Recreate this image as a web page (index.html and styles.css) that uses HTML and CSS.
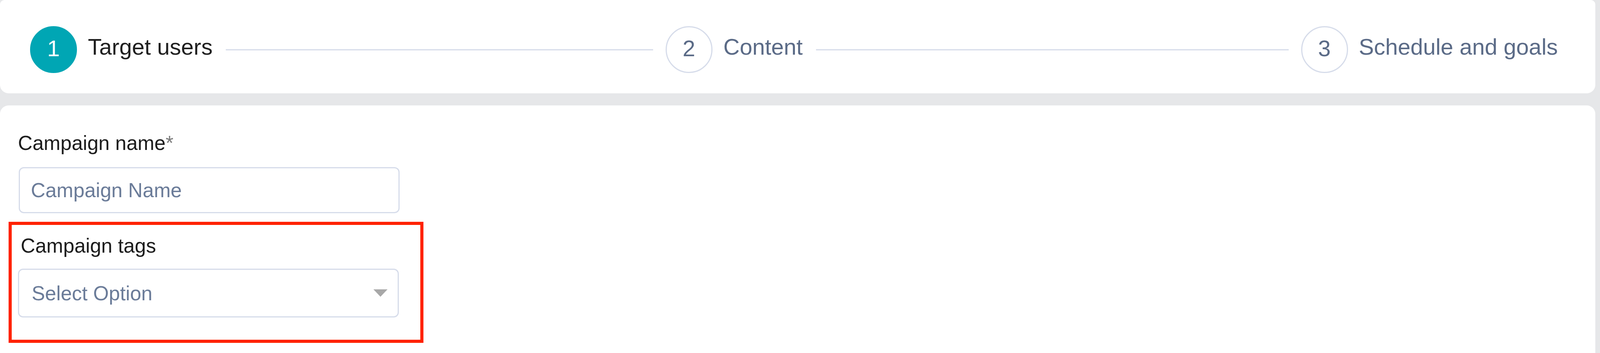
FILE: index.html
```html
<!DOCTYPE html>
<html lang="en">
<head>
<meta charset="utf-8">
<title>Create campaign</title>
<link rel="stylesheet" href="styles.css">
</head>
<body>
<div class="page">
  <section class="card stepper">
    <div class="step active">
      <span class="step-num">1</span>
      <span class="step-label">Target users</span>
      <span class="step-line"></span>
    </div>
    <div class="step">
      <span class="step-num">2</span>
      <span class="step-label">Content</span>
      <span class="step-line"></span>
    </div>
    <div class="step last">
      <span class="step-num">3</span>
      <span class="step-label">Schedule and goals</span>
    </div>
  </section>
  <section class="card form">
    <div class="field">
      <label class="field-label" for="cname">Campaign name<span class="req">*</span></label>
      <input class="text-input" id="cname" type="text" placeholder="Campaign Name">
    </div>
    <div class="field field-highlight">
      <label class="field-label tags-label">Campaign tags</label>
      <div class="select" role="combobox" aria-expanded="false">
        <span class="select-placeholder">Select Option</span>
        <svg class="select-arrow" width="36" height="19" viewBox="0 0 36 19" aria-hidden="true"><polygon points="0,0 36,0 18,19" fill="#a8a8a8"/></svg>
      </div>
    </div>
  </section>
</div>
</body>
</html>
```
FILE: styles.css
```css
* { box-sizing: border-box; }

html, body {
  margin: 0;
  padding: 0;
}

body {
  font-family: "Liberation Sans", Arial, sans-serif;
  background: #e6e7e9;
  color: #1c1c1c;
}

.page {
  min-height: 100vh;
  display: flex;
  flex-direction: column;
  gap: 31px;
  padding-right: 12px;
  background: #e6e7e9;
}

.card {
  background: #ffffff;
}

/* ---------- stepper ---------- */
.stepper {
  display: flex;
  align-items: center;
  padding: 67px 96px 52px 77px;
  border-radius: 12px 12px 22px 22px;
}

.step {
  flex: 1 1 0;
  min-width: 0;
  display: flex;
  align-items: center;
}

.step.last {
  flex: 0 0 auto;
}

.step-num {
  flex: 0 0 auto;
  width: 120px;
  height: 120px;
  border-radius: 50%;
  border: 3px solid #d6dcea;
  background: #ffffff;
  color: #5b6b87;
  font-size: 58px;
  line-height: 1;
  display: flex;
  align-items: center;
  justify-content: center;
  padding-bottom: 6px;
}

.step.active .step-num {
  background: #00a6b4;
  border-color: #00a6b4;
  color: #ffffff;
}

.step-label {
  flex: 0 0 auto;
  margin-left: 28px;
  margin-bottom: 14px;
  font-size: 58px;
  line-height: 1.149;
  color: #5b6b87;
  white-space: nowrap;
}

.step.active .step-label {
  color: #1f1f1f;
}

.step-line {
  flex: 1 1 auto;
  min-width: 0;
  height: 3px;
  background: #d6dcea;
  margin: 0 32px 0 34px;
}

/* ---------- form ---------- */
.form {
  flex: 1 0 auto;
  padding: 67px 40px 40px 46px;
  border-radius: 22px 22px 0 0;
}

.field {
  width: 975px;
}

.field + .field {
  margin-top: 54px;
}

.field-label {
  display: block;
  font-size: 51.5px;
  line-height: 59px;
  color: #1c1c1c;
  margin-bottom: 32px;
}

.req {
  color: #7a7a7a;
}

.text-input {
  display: block;
  width: 975px;
  height: 118px;
  margin-left: 2px;
  border: 3px solid #d6dcea;
  border-radius: 13px;
  padding: 0 28px;
  font-family: "Liberation Sans", Arial, sans-serif;
  font-size: 51.5px;
  color: #1c1c1c;
  background: #ffffff;
  outline: none;
}

.text-input::placeholder {
  color: #6b7c99;
  opacity: 1;
}

.field-highlight {
  position: relative;
}

.field-highlight::after {
  content: "";
  position: absolute;
  top: -32px;
  left: -24px;
  width: 1046px;
  height: 294px;
  border: 8px solid #ff2200;
  pointer-events: none;
}

.tags-label {
  margin-left: 7px;
  margin-bottom: 29px;
}

.select {
  display: flex;
  align-items: center;
  justify-content: space-between;
  width: 975px;
  height: 125px;
  border: 3px solid #d6dcea;
  border-radius: 13px;
  padding: 0 26px 0 32px;
  background: #ffffff;
  font-size: 51.5px;
  color: #6b7c99;
}

.select-arrow {
  display: block;
  flex: 0 0 auto;
}
```
